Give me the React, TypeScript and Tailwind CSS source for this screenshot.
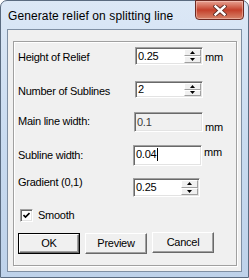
import React from "react";

const sunken =
  "border border-t-[#a0a0a0] border-l-[#a0a0a0] border-b-white border-r-white shadow-[inset_1px_1px_0_#696969,inset_-1px_-1px_0_#e3e3e3]";

function Spin() {
  const half =
    "flex-1 flex items-center justify-center bg-[#f0f0f0] border border-t-white border-l-white border-b-[#a0a0a0] border-r-[#a0a0a0]";
  return (
    <div className="ml-auto flex h-full w-[17px] flex-col">
      <div className={half}>
        <svg width="5" height="3" viewBox="0 0 5 3">
          <path d="M2.5 0 L5 3 L0 3 Z" fill="#000" />
        </svg>
      </div>
      <div className={half}>
        <svg width="5" height="3" viewBox="0 0 5 3">
          <path d="M0 0 L5 0 L2.5 3 Z" fill="#000" />
        </svg>
      </div>
    </div>
  );
}

type FieldProps = {
  value: string;
  width: string;
  height: string;
  spin?: boolean;
  disabled?: boolean;
  caret?: boolean;
  top?: boolean;
};

function Field({ value, width, height, spin, disabled, caret, top }: FieldProps) {
  return (
    <div
      className={`${width} ${height} ${sunken} flex p-[1px] ${
        disabled ? "bg-[#f0f0f0] text-[#3c3c3c]" : "bg-white text-black"
      }`}
    >
      <div className={`flex pl-[1px] ${top ? "items-start pt-[1px]" : "items-center"}`}>
        <span>{value}</span>
        {caret && <span className="ml-[1px] h-[13px] w-px bg-black" />}
      </div>
      {spin && <Spin />}
    </div>
  );
}

function Btn({ label, def }: { label: string; def?: boolean }) {
  return (
    <div className={`flex h-[21px] w-[62px] ${def ? "border border-black" : ""}`}>
      <div className="flex flex-1 items-center justify-center border border-t-white border-l-white border-b-[#696969] border-r-[#696969] bg-[#f0f0f0] shadow-[inset_-1px_-1px_0_#a0a0a0]">
        {label}
      </div>
    </div>
  );
}

export default function App() {
  return (
    <div
      className="h-[280px] w-[249px] overflow-hidden bg-white text-[11px] leading-[13px] tracking-[-0.25px] text-black"
      style={{ fontFamily: '"Liberation Sans", Arial, sans-serif' }}
    >
      <div className="flex h-[278px] flex-col rounded-t-[7px] border border-[#5a6b80] bg-gradient-to-b from-[#dce8f6] via-[#c9dbf0] to-[#bed2ea]">
        {/* title bar */}
        <div className="flex h-[28px] items-start">
          <div className="pl-[7px] pt-[8px] text-[12px] leading-[14px] tracking-[0.1px]">
            Generate relief on splitting line
          </div>
          <div className="ml-auto mr-[4px] -mt-px flex h-[20px] w-[49px] items-center justify-center rounded-b-[4px] border border-[#6d2a22] bg-gradient-to-b from-[#e6a192] via-[#c43f2a] to-[#d6836a] shadow-[inset_0_0_0_1px_rgba(255,220,210,0.45)]">
            <svg width="14" height="11" viewBox="0 0 14 11">
              <path d="M2.5 1.5 L11.5 9.5 M11.5 1.5 L2.5 9.5" stroke="#5a2a24" strokeWidth="4.2" strokeLinecap="square" />
              <path d="M2.5 1.5 L11.5 9.5 M11.5 1.5 L2.5 9.5" stroke="#fff" strokeWidth="2.4" strokeLinecap="square" />
            </svg>
          </div>
        </div>

        {/* client area */}
        <div className="ml-[6px] h-[243px] w-[235px] border border-[#7f8fa3] bg-[#f0f0f0] pl-[5px] pt-[11px]">
          <div className="h-[225px] w-[224px] border border-[#a0a0a0] pl-[4px] pt-[5px] shadow-[inset_1px_1px_0_#fff,1px_1px_0_#fff]">
            {/* Height of Relief */}
            <div className="flex h-[18px] items-start">
              <div className="w-[117px] pt-[4px]">Height of Relief</div>
              <Field value="0.25" width="w-[68px]" height="h-[18px]" spin />
              <div className="ml-[2px] pt-[4px]">mm</div>
            </div>

            {/* Number of Sublines */}
            <div className="mt-[16px] flex h-[17px] items-start">
              <div className="w-[117px] pt-[4px]">Number of Sublines</div>
              <Field value="2" width="w-[68px]" height="h-[17px]" spin />
            </div>

            {/* Main line width */}
            <div className="mt-[14px] flex h-[20px] items-start">
              <div className="w-[116px] pt-[3px]">Main line width:</div>
              <Field value="0.1" width="w-[69px]" height="h-[20px]" disabled />
              <div className="ml-[2px] pt-[9px]">mm</div>
            </div>

            {/* Subline width */}
            <div className="mt-[13px] flex h-[21px] items-start">
              <div className="w-[115px] pt-[4px]">Subline width:</div>
              <Field value="0.04" width="w-[69px]" height="h-[21px]" caret top />
              <div className="ml-[2px] pt-[1px]">mm</div>
            </div>

            {/* Gradient */}
            <div className="mt-[12px] flex h-[19px] items-start">
              <div className="-mt-[2px] w-[115px]">Gradient (0,1)</div>
              <Field value="0.25" width="w-[67px]" height="h-[19px]" spin />
            </div>

            {/* Smooth */}
            <div className="mt-[12px] flex h-[13px] items-center pl-[2px]">
              <div className={`flex h-[13px] w-[13px] items-center justify-center bg-white ${sunken}`}>
                <svg width="7" height="7" viewBox="0 0 7 7">
                  <path d="M0.5 3 L2.5 5 L6.5 1" stroke="#000" strokeWidth="1.6" fill="none" />
                </svg>
              </div>
              <div className="ml-[5px]">Smooth</div>
            </div>

            {/* buttons */}
            <div className="mt-[11px] flex items-start gap-[5px]">
              <Btn label="OK" def />
              <Btn label="Preview" />
              <div className="-mt-px">
                <Btn label="Cancel" />
              </div>
            </div>
          </div>
        </div>
      </div>
    </div>
  );
}
